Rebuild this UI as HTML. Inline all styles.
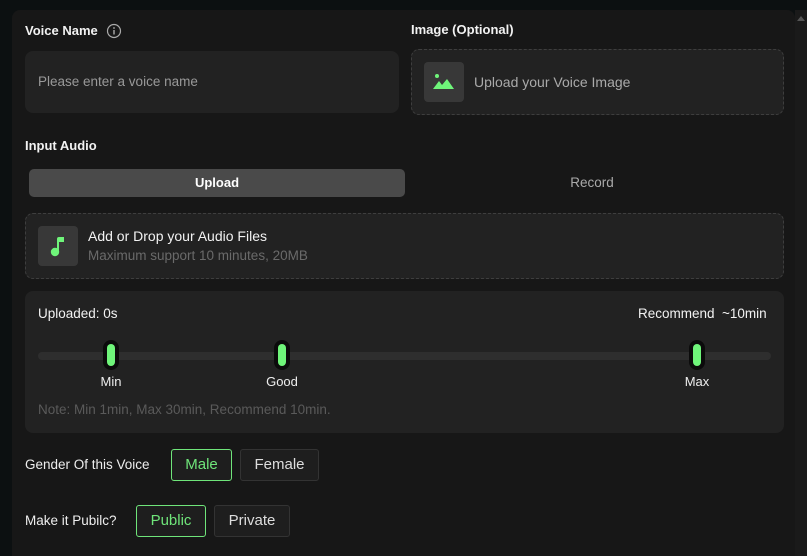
<!DOCTYPE html>
<html style="height:556px;overflow:hidden"><head><style>
*{box-sizing:border-box;margin:0;padding:0}
body{width:807px;height:556px;background:#0c1011;font-family:"Liberation Sans",sans-serif;overflow:hidden;position:relative;color:#fff}
.panel{position:absolute;left:12px;top:10px;width:783px;height:546px;background:#171717;border-radius:8px 8px 0 0}
.sb{position:absolute;left:795px;top:10px;width:12px;height:546px;background:#1a1a1a}
.abs{position:absolute}
.lbl{font-size:13px;font-weight:bold;color:#f2f2f2}
.box{background:#222;border-radius:8px}
.dash{border:1px dashed #3e3e3e;background:#222;border-radius:8px}
.ico{background:#383838;border-radius:4px}
.btn{position:absolute;border:1px solid #333;background:#1e1e1e;border-radius:3px;font-size:15px;color:#ddd;text-align:center}
.btn.on{border-color:#6fe57a;color:#6fe57a}
.knob{position:absolute;width:16px;height:30px;background:#0b0b0b;border-radius:8px;top:340px}
.knob:after{content:"";position:absolute;left:4px;top:4px;width:8px;height:22px;border-radius:4px;background:#6ff57a}
.kl{position:absolute;top:374px;font-size:13px;color:#eee;text-align:center;width:60px}
</style></head><body>
<div class="panel"></div>
<div class="sb"><div style="margin:6px auto 0;width:0;height:0;border-left:4px solid transparent;border-right:4px solid transparent;border-bottom:5px solid #555"></div></div>

<div class="abs lbl" style="left:25px;top:23px">Voice Name</div>
<svg class="abs" style="left:106px;top:23px" width="16" height="16" viewBox="0 0 16 16"><circle cx="8" cy="8" r="6.5" fill="none" stroke="#aaa" stroke-width="1.2"/><rect x="7.3" y="7" width="1.4" height="4.5" fill="#aaa"/><circle cx="8" cy="5" r="0.9" fill="#aaa"/></svg>
<div class="abs box" style="left:25px;top:51px;width:374px;height:62px"></div>
<div class="abs" style="left:38px;top:74px;font-size:13.5px;color:#999">Please enter a voice name</div>

<div class="abs lbl" style="left:411px;top:22px">Image (Optional)</div>
<div class="abs dash" style="left:411px;top:49px;width:373px;height:66px"></div>
<div class="abs ico" style="left:424px;top:62px;width:40px;height:40px"></div>
<svg class="abs" style="left:432px;top:72px" width="24" height="20" viewBox="0 0 24 20"><circle cx="5" cy="4" r="2" fill="#6ff57a"/><path d="M1 17 L7 9 L10 13 L15 7 L22 17 Z" fill="#6ff57a"/></svg>
<div class="abs" style="left:474px;top:74px;font-size:14px;color:#aaa">Upload your Voice Image</div>

<div class="abs lbl" style="left:25px;top:138px">Input Audio</div>
<div class="abs" style="left:29px;top:169px;width:376px;height:28px;background:#4a4a4a;border-radius:5px;text-align:center;line-height:28px;font-size:13px;font-weight:bold">Upload</div>
<div class="abs" style="left:405px;top:169px;width:374px;height:28px;text-align:center;line-height:28px;font-size:13.5px;color:#aaa">Record</div>

<div class="abs dash" style="left:25px;top:213px;width:759px;height:66px"></div>
<div class="abs ico" style="left:38px;top:226px;width:40px;height:40px"></div>
<svg class="abs" style="left:48px;top:234px" width="20" height="24" viewBox="0 0 20 24"><circle cx="7" cy="18" r="4.2" fill="#6ff57a"/><path d="M9 18 V5 Q9 3 11 3 L16 3 V8 L11 8 V18 Z" fill="#6ff57a"/></svg>
<div class="abs" style="left:88px;top:228px;font-size:14px;color:#f2f2f2">Add or Drop your Audio Files</div>
<div class="abs" style="left:88px;top:248px;font-size:13.5px;color:#6a6a6a">Maximum support 10 minutes, 20MB</div>

<div class="abs box" style="left:25px;top:291px;width:759px;height:142px"></div>
<div class="abs" style="left:38px;top:306px;font-size:13.5px;color:#f2f2f2">Uploaded: 0s</div>
<div class="abs" style="left:638px;top:306px;font-size:13.5px;color:#f2f2f2">Recommend&nbsp; ~10min</div>
<div class="abs" style="left:38px;top:352px;width:733px;height:8px;background:#2e2e2e;border-radius:4px"></div>
<div class="knob" style="left:103px"></div>
<div class="knob" style="left:274px"></div>
<div class="knob" style="left:689px"></div>
<div class="kl" style="left:81px">Min</div>
<div class="kl" style="left:252px">Good</div>
<div class="kl" style="left:667px">Max</div>
<div class="abs" style="left:38px;top:402px;font-size:13.5px;color:#5a5a5a">Note: Min 1min, Max 30min, Recommend 10min.</div>

<div class="abs" style="left:25px;top:457px;font-size:13.5px;color:#eee">Gender Of this Voice</div>
<div class="btn on" style="left:171px;top:449px;width:61px;height:32px;line-height:30px">Male</div>
<div class="btn" style="left:240px;top:449px;width:79px;height:32px;line-height:30px">Female</div>
<div class="abs" style="left:25px;top:513px;font-size:13.5px;color:#eee">Make it Pubilc?</div>
<div class="btn on" style="left:136px;top:505px;width:70px;height:32px;line-height:30px">Public</div>
<div class="btn" style="left:214px;top:505px;width:76px;height:32px;line-height:30px">Private</div>
</body></html>
